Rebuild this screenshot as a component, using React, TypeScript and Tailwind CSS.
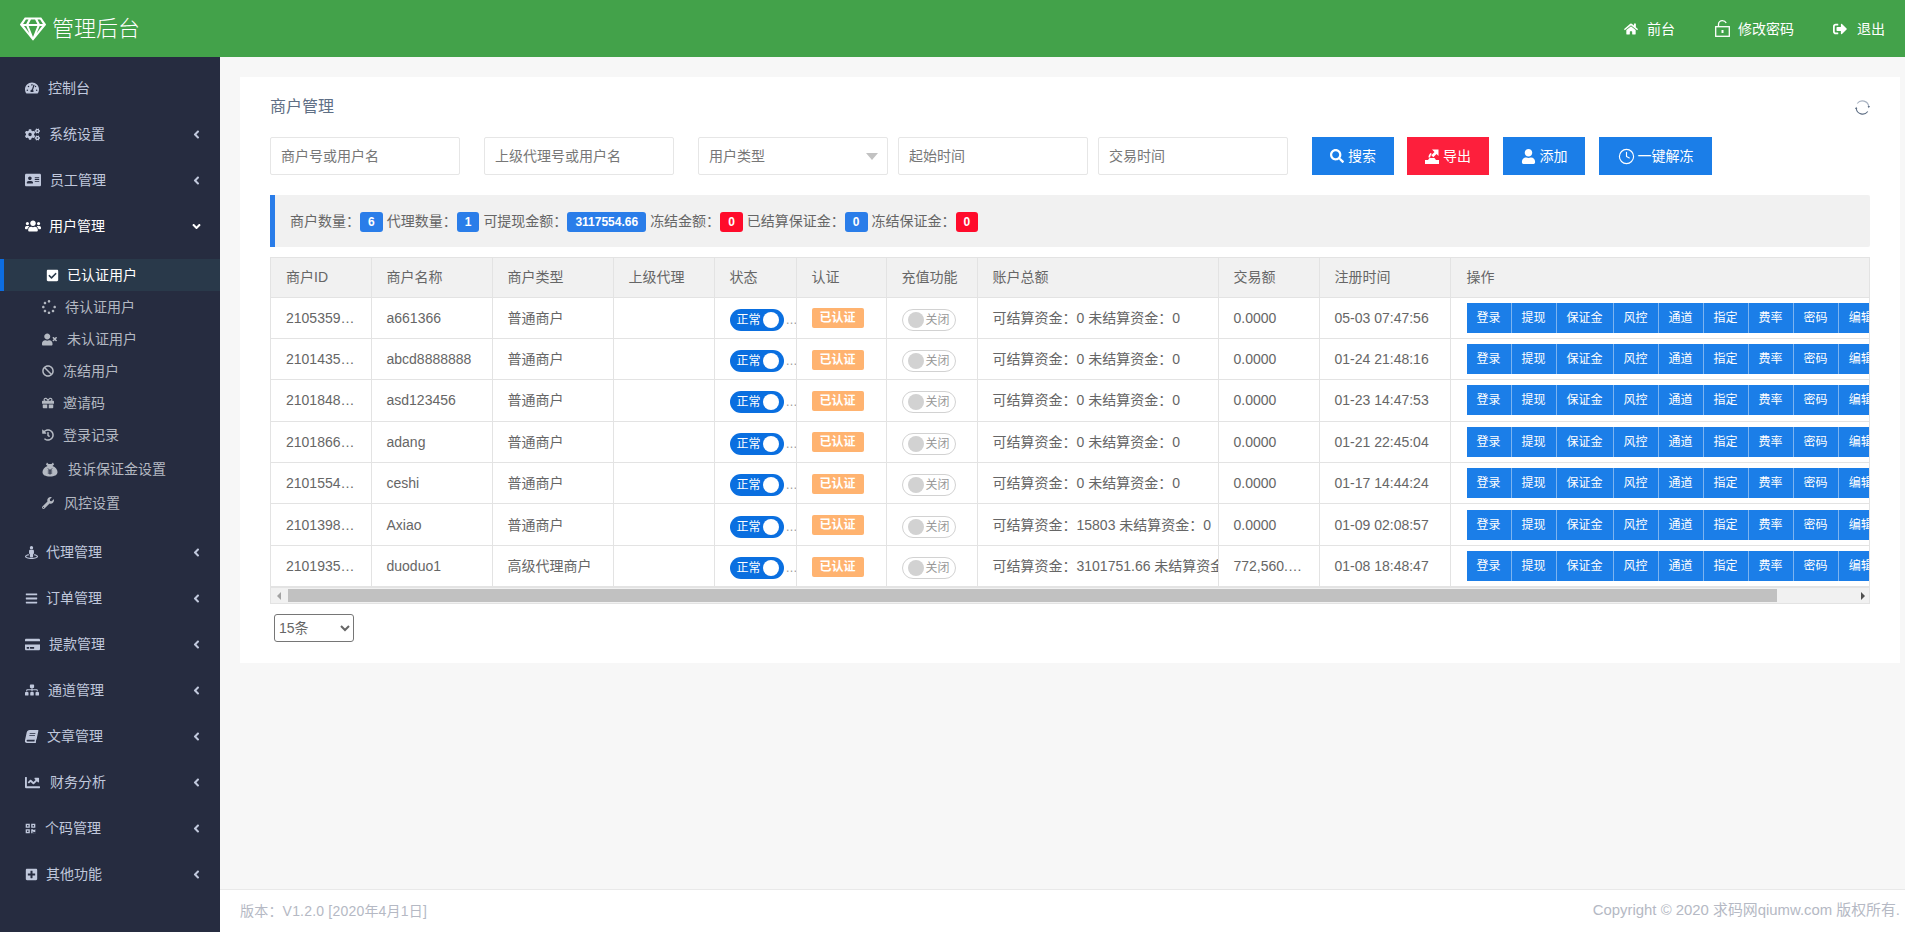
import React from 'react';
import {
  FaAddressCard,
  FaAngleDown,
  FaAngleLeft,
  FaBan,
  FaBars,
  FaBook,
  FaChartLine,
  FaCheckSquare,
  FaCogs,
  FaCreditCard,
  FaGift,
  FaHistory,
  FaHome,
  FaPlusSquare,
  FaQrcode,
  FaRegGem,
  FaSearch,
  FaSignOutAlt,
  FaSitemap,
  FaSpinner,
  FaStreetView,
  FaTachometerAlt,
  FaUser,
  FaUsers,
  FaUserTimes,
  FaWrench,
} from 'react-icons/fa';
import { Clock } from 'lucide-react';

function MoneyBagIcon({ size = 16 }: { size?: number }) {
  return (
    <svg width={size} height={size} viewBox="0 0 16 16">
      <path d="M5 1.500 6.500 3h3L11 1.500 12 3.500 10.500 5c3 1 5 3.500 5 6 0 3-3 4.500-7.500 4.500S.5 14 .5 11c0-2.500 2-5 5-6L4 3.500z" fill="currentColor" />
      <path d="M6 7.500 8 9.500 10 7.500M5.800 10h4.400M5.800 12h4.400M8 9.500V13.500" fill="none" stroke="#262c40" strokeWidth="1" />
    </svg>
  );
}

function LockOpenIcon() {
  return (
    <svg width="15" height="17" viewBox="0 0 15 17" fill="none" stroke="currentColor" strokeWidth="1.300">
      <rect x="0.700" y="6.700" width="13.600" height="9.600" />
      <path d="M3.500 6.500V4.200C3.500 2 5.200.7 7.300.7c1.800 0 3.200.8 3.900 2.300" />
      <path d="M7.500 10v3" strokeWidth="2" />
    </svg>
  );
}

function ExportIcon() {
  return (
    <svg width="14" height="15" viewBox="0 0 14 15" fill="currentColor">
      <path d="M0 11h3l1.500-2h5L11 11h3v4H0z" />
      <path d="M7 .5h6.500V7l-2-2L8.300 8.200 6.300 6.200 9.500 3z" />
      <path d="M3.500 8.500C3.500 6.500 4.300 5 5.800 4L6.800 5C5.800 6 5.300 7 5.200 8.500z" />
    </svg>
  );
}

function RefreshIcon() {
  return (
    <svg width="15" height="15" viewBox="0 0 15 15" fill="none" strokeWidth="1.100">
      <path d="M2.200 3.500A6.500 6.500 0 0 1 13.800 6.500" stroke="#a9b3c2" />
      <path d="M12.800 11.500A6.500 6.500 0 0 1 1.200 8.500" stroke="#5f6f85" />
      <path d="M13.800 8.200 12.600 6h2.400zM1.200 6.800 2.400 9H0z" fill="#5f6f85" />
    </svg>
  );
}

const stats = [
  { label: '商户数量：', value: '6', color: 'bg-[#2a7de9]' },
  { label: '代理数量：', value: '1', color: 'bg-[#2a7de9]' },
  { label: '可提现金额：', value: '3117554.66', color: 'bg-[#2a7de9]' },
  { label: '冻结金额：', value: '0', color: 'bg-[#ff0b2b]' },
  { label: '已结算保证金：', value: '0', color: 'bg-[#2a7de9]' },
  { label: '冻结保证金：', value: '0', color: 'bg-[#ff0b2b]' },
];

const columns = [
  { title: '商户ID', width: 'w-[100px]' },
  { title: '商户名称', width: 'w-[121px]' },
  { title: '商户类型', width: 'w-[121px]' },
  { title: '上级代理', width: 'w-[101px]' },
  { title: '状态', width: 'w-[82px]' },
  { title: '认证', width: 'w-[90px]' },
  { title: '充值功能', width: 'w-[91px]' },
  { title: '账户总额', width: 'w-[241px]' },
  { title: '交易额', width: 'w-[101px]' },
  { title: '注册时间', width: 'w-[131px]' },
  { title: '操作', width: 'w-[505px]' },
];

const rows = [
  { id: '2105359…', name: 'a661366', type: '普通商户', funds: '可结算资金：0 未结算资金：0', volume: '0.0000', time: '05-03 07:47:56' },
  { id: '2101435…', name: 'abcd8888888', type: '普通商户', funds: '可结算资金：0 未结算资金：0', volume: '0.0000', time: '01-24 21:48:16' },
  { id: '2101848…', name: 'asd123456', type: '普通商户', funds: '可结算资金：0 未结算资金：0', volume: '0.0000', time: '01-23 14:47:53' },
  { id: '2101866…', name: 'adang', type: '普通商户', funds: '可结算资金：0 未结算资金：0', volume: '0.0000', time: '01-21 22:45:04' },
  { id: '2101554…', name: 'ceshi', type: '普通商户', funds: '可结算资金：0 未结算资金：0', volume: '0.0000', time: '01-17 14:44:24' },
  { id: '2101398…', name: 'Axiao', type: '普通商户', funds: '可结算资金：15803 未结算资金：0', volume: '0.0000', time: '01-09 02:08:57' },
  { id: '2101935…', name: 'duoduo1', type: '高级代理商户', funds: '可结算资金：3101751.66 未结算资金：0', volume: '772,560.…', time: '01-08 18:48:47' },
];

const actions = ['登录', '提现', '保证金', '风控', '通道', '指定', '费率', '密码', '编辑', '删除'];

function Badge({ value, color }: { value: string; color: string }) {
  return (
    <span className={`inline-flex h-5 items-center rounded-[3px] px-2 text-xs font-bold text-white ${color}`}>
      {value}
    </span>
  );
}

function SideItem({
  icon,
  label,
  box,
  open,
}: {
  icon: React.ReactNode;
  label: string;
  box: string;
  open?: boolean;
}) {
  return (
    <div className={`flex h-[46px] items-center pl-[25px] pr-[17px] text-sm ${open ? 'text-white' : 'text-[#c0c8dc]'}`}>
      <span className={`flex shrink-0 items-center ${box}`}>{icon}</span>
      <span>{label}</span>
      {open ? <FaAngleDown size={13} className="ml-auto" /> : null}
      {open === false ? <FaAngleLeft size={13} className="ml-auto" /> : null}
    </div>
  );
}

function SubItem({
  icon,
  label,
  box,
  active,
  tall,
}: {
  icon: React.ReactNode;
  label: string;
  box: string;
  active?: boolean;
  tall?: boolean;
}) {
  return (
    <div
      className={`flex items-center text-sm ${tall ? 'h-9' : 'h-8'} ${
        active
          ? 'border-l-4 border-[#0d6de0] bg-[#29394a] pl-[42px] text-white'
          : 'pl-[42px] text-[#b4b9c2]'
      }`}
    >
      <span className={`flex shrink-0 items-center ${box}`}>{icon}</span>
      <span>{label}</span>
    </div>
  );
}

function Sidebar() {
  return (
    <aside className="flex w-[220px] shrink-0 flex-col bg-[#262c40] pt-2">
      <SideItem icon={<FaTachometerAlt size={14} />} label="控制台" box="w-[23px]" />
      <SideItem icon={<FaCogs size={15} />} label="系统设置" box="w-6" open={false} />
      <SideItem icon={<FaAddressCard size={16} />} label="员工管理" box="w-[25px]" open={false} />
      <SideItem icon={<FaUsers size={16} />} label="用户管理" box="w-6" open />
      <div className="py-2.5">
        <SubItem icon={<FaCheckSquare size={13} />} label="已认证用户" box="w-[21px]" active />
        <SubItem icon={<FaSpinner size={14} />} label="待认证用户" box="w-[23px]" />
        <SubItem icon={<FaUserTimes size={15} />} label="未认证用户" box="w-[25px]" />
        <SubItem icon={<FaBan size={12} />} label="冻结用户" box="w-[21px]" />
        <SubItem icon={<FaGift size={12} />} label="邀请码" box="w-[21px]" />
        <SubItem icon={<FaHistory size={12} />} label="登录记录" box="w-[21px]" />
        <SubItem icon={<MoneyBagIcon />} label="投诉保证金设置" box="w-[26px]" tall />
        <SubItem icon={<FaWrench size={12} />} label="风控设置" box="w-[22px]" />
      </div>
      <SideItem icon={<FaStreetView size={13} />} label="代理管理" box="w-[21px]" open={false} />
      <SideItem icon={<FaBars size={13} />} label="订单管理" box="w-[21px]" open={false} />
      <SideItem icon={<FaCreditCard size={15} />} label="提款管理" box="w-6" open={false} />
      <SideItem icon={<FaSitemap size={14} />} label="通道管理" box="w-[23px]" open={false} />
      <SideItem icon={<FaBook size={13} className="-skew-x-12" />} label="文章管理" box="w-[22px]" open={false} />
      <SideItem icon={<FaChartLine size={15} />} label="财务分析" box="w-[25px]" open={false} />
      <SideItem icon={<FaQrcode size={11} />} label="个码管理" box="w-5" open={false} />
      <SideItem icon={<FaPlusSquare size={13} />} label="其他功能" box="w-[21px]" open={false} />
    </aside>
  );
}

function Filters() {
  const inputClass =
    'h-[38px] w-[190px] rounded-[2px] border border-[#e6e6e6] bg-white pl-2.5 text-sm text-[#666] outline-none placeholder:text-[#777]';
  return (
    <div className="flex">
      <input className={inputClass} placeholder="商户号或用户名" />
      <input className={`${inputClass} ml-6`} placeholder="上级代理号或用户名" />
      <div className="relative ml-6 flex h-[38px] w-[190px] items-center rounded-[2px] border border-[#e6e6e6] bg-white pl-2.5 text-sm text-[#777]">
        用户类型
        <span className="absolute right-[9px] top-[15px] h-0 w-0 border-x-[6px] border-t-[7px] border-x-transparent border-t-[#c2c2c2]" />
      </div>
      <input className={`${inputClass} ml-2.5`} placeholder="起始时间" />
      <input className={`${inputClass} ml-2.5`} placeholder="交易时间" />
      <button className="ml-6 flex h-[38px] w-[82px] items-center justify-center gap-1 bg-[#1b7ee8] text-sm text-white">
        <FaSearch size={14} />
        搜索
      </button>
      <button className="ml-[13px] flex h-[38px] w-[82px] items-center justify-center gap-1 bg-[#fd1f3c] text-sm text-white">
        <ExportIcon />
        导出
      </button>
      <button className="ml-3.5 flex h-[38px] w-[82px] items-center justify-center gap-1 bg-[#1b7ee8] text-sm text-white">
        <FaUser size={15} />
        添加
      </button>
      <button className="ml-3.5 flex h-[38px] w-[113px] items-center justify-center gap-[3px] bg-[#1b7ee8] text-sm text-white">
        <Clock size={17} strokeWidth={1.6} />
        一键解冻
      </button>
    </div>
  );
}

function UserTable() {
  const cell = 'overflow-hidden whitespace-nowrap border-r border-[#e3e3e3] px-[15px] text-sm font-normal text-[#666]';
  return (
    <div className="mt-2.5 border border-[#e3e3e3]">
      <div className="overflow-hidden">
        <table className="w-[1684px] table-fixed border-collapse text-left">
          <thead>
            <tr className="h-[39px] border-b border-[#e3e3e3] bg-[#f1f1f1]">
              {columns.map((col) => (
                <th key={col.title} className={`${cell} ${col.width} last:pl-4`}>
                  {col.title}
                </th>
              ))}
            </tr>
          </thead>
          <tbody>
            {rows.map((row) => (
              <tr key={row.id} className="h-[41.4px] border-b border-[#e3e3e3]">
                <td className={`${cell} text-[#333]`}>{row.id}</td>
                <td className={cell}>{row.name}</td>
                <td className={cell}>{row.type}</td>
                <td className={cell} />
                <td className={`${cell} pr-0`}>
                  <div className="flex items-center pt-1">
                    <span className="flex h-[22px] w-[54px] shrink-0 items-center justify-between rounded-full bg-[#0a6fe0] pl-[7px] pr-[5px] text-xs text-white">
                      正常
                      <span className="h-4 w-4 rounded-full bg-white" />
                    </span>
                    <span className="ml-0.5 text-xs text-[#999]">…</span>
                  </div>
                </td>
                <td className={cell}>
                  <span className="inline-flex h-5 w-[52px] items-center justify-center rounded-[2px] bg-[#ffb370] text-xs font-bold text-white">
                    已认证
                  </span>
                </td>
                <td className={cell}>
                  <div className="pt-1">
                    <span className="flex h-[22px] w-[54px] items-center rounded-full border border-[#d2d2d2] bg-white pl-[5px] text-xs text-[#999]">
                      <span className="mr-0.5 h-4 w-4 rounded-full bg-[#d2d2d2]" />
                      关闭
                    </span>
                  </div>
                </td>
                <td className={`${cell} pr-0`}>{row.funds}</td>
                <td className={cell}>{row.volume}</td>
                <td className={cell}>{row.time}</td>
                <td className={`${cell} border-r-0 pl-4`}>
                  <div className="flex">
                    {actions.map((action) => (
                      <span
                        key={action}
                        className="flex h-[30px] shrink-0 items-center border-r border-[#7db4f0] bg-[#1b7ee8] px-[10px] text-xs text-white last:border-r-0"
                      >
                        {action}
                      </span>
                    ))}
                  </div>
                </td>
              </tr>
            ))}
          </tbody>
        </table>
      </div>
      {/* scrollbar is drawn, headless chrome hides the native one */}
      <div className="flex h-4 items-center border-t border-[#e3e3e3] bg-[#f1f1f1]">
        <span className="ml-[6px] h-0 w-0 border-y-4 border-r-4 border-y-transparent border-r-[#a3a3a3]" />
        <span className="ml-[7px] h-[13px] w-[1489px] bg-[#c1c1c1]" />
        <span className="ml-auto mr-[4px] h-0 w-0 border-y-4 border-l-4 border-y-transparent border-l-[#505050]" />
      </div>
    </div>
  );
}

export default function App() {
  return (
    <div className="flex min-h-screen flex-col font-['Liberation_Sans','Noto_Sans_CJK_SC',sans-serif]">
      <header className="flex h-[57px] items-center bg-[#43a24a] pl-5 pr-5 text-white">
        <FaRegGem size={26} />
        <span className="ml-1.5 text-[22px] font-light">管理后台</span>
        <nav className="ml-auto flex items-center text-sm">
          <FaHome size={14} className="ml-px" />
          <span className="ml-[9px]">前台</span>
          <span className="ml-10">
            <LockOpenIcon />
          </span>
          <span className="ml-2">修改密码</span>
          <FaSignOutAlt size={14} className="ml-[39px]" />
          <span className="ml-2.5">退出</span>
        </nav>
      </header>
      <div className="flex flex-1">
        <Sidebar />
        <main className="flex min-w-0 flex-1 flex-col bg-[#f7f7f7]">
          <div className="ml-5 mr-[5px] mt-5 bg-white px-[30px] pb-[21px] pt-5">
            <div className="mb-5 flex h-5 items-center justify-between text-base text-[#5f6f85]">
              商户管理
              <RefreshIcon />
            </div>
            <Filters />
            <div className="mt-5 flex h-[52px] items-center rounded-r-[2px] border-l-[5px] border-[#2a7de9] bg-[#f1f1f1] pl-[15px] text-sm text-[#666]">
              {stats.map((stat) => (
                <React.Fragment key={stat.label}>
                  <span>{stat.label}</span>
                  <span className="mr-1">
                    <Badge value={stat.value} color={stat.color} />
                  </span>
                </React.Fragment>
              ))}
            </div>
            <UserTable />
            <select className="ml-1 mt-2.5 block h-7 w-20 rounded-[3px] border border-[#767676] bg-white text-sm text-[#666]">
              <option>15条</option>
              <option>30条</option>
              <option>50条</option>
            </select>
          </div>
          <footer className="mt-auto flex h-[43px] items-center justify-between border-t border-[#e9e9e9] bg-white pl-5 pr-[5px] text-sm text-[#b5b9c4]">
            <span className="tracking-[0.2px]">版本：V1.2.0 [2020年4月1日]</span>
            <span className="text-[14.9px]">Copyright © 2020 求码网qiumw.com 版权所有.</span>
          </footer>
        </main>
      </div>
    </div>
  );
}
